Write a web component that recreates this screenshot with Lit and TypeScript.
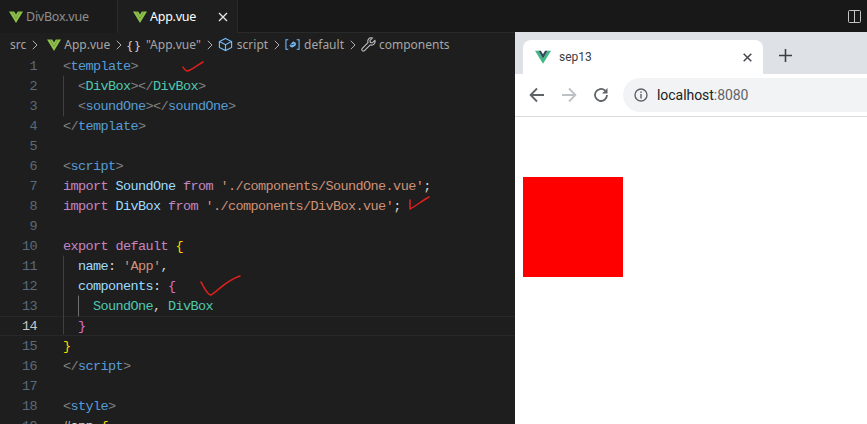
import { LitElement, html, css, svg } from "lit";
import { customElement } from "lit/decorators.js";

type Tok = [string, string];
const P = "p", T = "t", C = "c", K = "k", V = "v", N = "n", S = "s", W = "w", Y = "y", M = "m", A = "a";
const lines: Tok[][] = [
  [[P, "<"], [T, "template"], [P, ">"]],
  [[W, "  "], [P, "<"], [C, "DivBox"], [P, "></"], [C, "DivBox"], [P, ">"]],
  [[W, "  "], [P, "<"], [T, "soundOne"], [P, "></"], [T, "soundOne"], [P, ">"]],
  [[P, "</"], [T, "template"], [P, ">"]],
  [],
  [[P, "<"], [T, "script"], [P, ">"]],
  [[K, "import"], [W, " "], [V, "SoundOne"], [W, " "], [K, "from"], [W, " "], [S, "'./components/SoundOne.vue'"], [W, ";"]],
  [[K, "import"], [W, " "], [V, "DivBox"], [W, " "], [K, "from"], [W, " "], [S, "'./components/DivBox.vue'"], [W, ";"]],
  [],
  [[K, "export"], [W, " "], [K, "default"], [W, " "], [Y, "{"]],
  [[W, "  "], [N, "name"], [W, ": "], [S, "'App'"], [W, ","]],
  [[W, "  "], [N, "components"], [W, ": "], [M, "{"]],
  [[W, "    "], [A, "SoundOne"], [W, ", "], [A, "DivBox"]],
  [[W, "  "], [M, "}"]],
  [[Y, "}"]],
  [[P, "</"], [T, "script"], [P, ">"]],
  [],
  [[P, "<"], [T, "style"], [P, ">"]],
  [[W, "#app "], [Y, "{"]],
];

const vue = (a: string, b: string, cls = "vue") => html`<svg class=${cls} viewBox="0 0 14 12"><path d="M0 0.5H3L7 7.5L11 0.5H14L7 12Z" fill=${a}/><path d="M3 0.5H5.2L7 3.6L8.8 0.5H11L7 7.5Z" fill=${b}/></svg>`;
const chev = html`<svg class="chev" viewBox="0 0 6 10"><path d="M0.8 0.8L5 5L0.8 9.2" fill="none" stroke="#b0b0b0" stroke-width="1"/></svg>`;

@customElement("app-root")
export class AppRoot extends LitElement {
  static styles = css`
    :host { display: block; width: 867px; height: 424px; overflow: hidden; background: #1e1e1e; position: relative; font-family: "Noto Sans", sans-serif; }
    .top { display: flex; height: 33px; background: #181818; box-sizing: border-box; border-bottom: 1px solid #2a2a2a; }
    .tab { display: flex; align-items: center; height: 33px; box-sizing: border-box; font-size: 12.5px; letter-spacing: -0.25px; }
    .tab.off { width: 118px; padding-left: 9px; background: #1b1b1b; color: #8f8f8f; border-right: 1px solid #2a2a2a; }
    .tab.on { width: 120px; padding-left: 15px; background: #1e1e1e; color: #ffffff; border-right: 1px solid #2a2a2a; }
    .tab span { margin-left: 3px; }
    .tab.on span { flex: 1; }
    .x { width: 10px; height: 10px; margin-right: 9px; }
    .spacer { flex: 1; }
    .split { width: 13px; height: 13px; margin: 10px 6px 0 0; }
    .vue { width: 14px; height: 12px; flex: none; }
    .body { display: flex; height: 391px; }
    .editor { width: 515px; flex: none; background: #1e1e1e; overflow: hidden; position: relative; }
    .crumbs { display: flex; align-items: center; height: 23px; padding-left: 10px; font-size: 12px; color: #a6a6a6; white-space: nowrap; }
    .chev { width: 6px; height: 10px; margin: 0 5px 0 6px; flex: none; }
    .crumbs .vue { margin: 0 3px 0 4px; }
    .ic { width: 15px; height: 15px; flex: none; margin-right: 4px; }
    .ic.tight { margin-right: 3px; }
    .brace { color: #d0d0d0; margin-right: 3px; font-size: 13px; letter-spacing: 3px; }
    .code { font-family: "Liberation Mono", monospace; font-size: 13.5px; letter-spacing: -0.6px; line-height: 20px; }
    .ln { display: flex; height: 20px; box-sizing: border-box; position: relative; }
    .ln.cur { box-shadow: inset 0 1px 0 #282828, inset 0 -1px 0 #282828; }
    .num { width: 37px; text-align: right; color: #5a6a78; flex: none; padding-top: 1px; }
    .num.cur { color: #c6c6c6; }
    .txt { margin-left: 26px; white-space: pre; padding-top: 1px; }
    .p { color: #808080; } .t { color: #569cd6; } .c { color: #4ec9b0; } .k { color: #c586c0; }
    .v { color: #9cdcfe; } .n { color: #9cdcfe; } .s { color: #ce9178; } .w { color: #d4d4d4; }
    .y { color: #ffd700; } .m { color: #da70d6; } .a { color: #4ec9b0; }
    .browser { flex: 1; display: flex; flex-direction: column; background: #fff; margin-top: -1px; }
    .strip { height: 42px; box-sizing: border-box; padding: 8px 0 0 8px; background: #dee1e6; display: flex; align-items: stretch; }
    .btab { width: 240px; background: #fff; border-radius: 8px 8px 0 0; display: flex; align-items: center; padding: 0 11px 0 12px; box-sizing: border-box; font-family: "Roboto", sans-serif; font-size: 12px; color: #3c4043; }
    .btab .vue { width: 16px; height: 14px; margin-right: 8px; }
    .btab span { flex: 1; }
    .bx { width: 9px; height: 9px; }
    .plus { width: 13px; height: 13px; margin: 9px 0 0 16px; }
    .bar { height: 43px; box-sizing: border-box; display: flex; align-items: center; padding: 0 0 0 14px; border-bottom: 1px solid #dadce0; background: #fff; }
    .nav { width: 16px; height: 16px; margin-right: 16px; flex: none; }
    .nav.last { margin-right: 14px; }
    .omni { flex: 1; height: 34px; background: #f1f3f4; border-radius: 17px 0 0 17px; display: flex; align-items: center; padding-left: 11px; font-family: "Roboto", sans-serif; font-size: 14px; letter-spacing: -0.05px; color: #202124; }
    .omni svg { width: 14px; height: 14px; margin-right: 9px; }
    .omni i { font-style: normal; color: #5f6368; }
    .page { flex: 1; padding: 60px 0 0 8px; background: #fff; }
    .red { width: 100px; height: 100px; background: #ff0000; }
    .marks { position: absolute; left: 0; top: 0; width: 867px; height: 424px; pointer-events: none; }
  `;

  render() {
    return html`
      <div class="top">
        <div class="tab off">${vue("#8dc149", "#8dc149")}<span>DivBox.vue</span></div>
        <div class="tab on">${vue("#8dc149", "#8dc149")}<span>App.vue</span>
          <svg class="x" viewBox="0 0 10 10"><path d="M1 1L9 9M9 1L1 9" stroke="#e8e8e8" stroke-width="1.3"/></svg></div>
        <div class="spacer"></div>
        <svg class="split" viewBox="0 0 13 13"><rect x="0.5" y="0.5" width="12" height="12" rx="1" fill="none" stroke="#c5c5c5"/><path d="M6.5 0.5V12.5" stroke="#c5c5c5"/></svg>
      </div>
      <div class="body">
        <div class="editor">
          <div class="crumbs">
            <span>src</span>${chev}${vue("#8dc149", "#8dc149")}<span>App.vue</span>${chev}
            <span class="brace">{}</span><span>"App.vue"</span>${chev}
            <svg class="ic" viewBox="0 0 16 16"><path d="M8 1.5L14.5 4.8V11.2L8 14.5L1.5 11.2V4.8ZM1.5 4.8L8 8.2L14.5 4.8M8 8.2V14.5" fill="none" stroke="#75beff" stroke-width="1.2"/></svg>
            <span>script</span>${chev}
            <svg class="ic" viewBox="0 0 16 16"><path d="M3.5 3H1V13H3.5M12.5 3H15V13H12.5" fill="none" stroke="#75beff" stroke-width="1.1"/><path d="M5 9.5L8.5 5L11.5 6.5L11 9L7.5 11Z" fill="#75beff" stroke="#75beff" stroke-width="0.6"/><path d="M6 8.5L10 7.5" stroke="#1e1e1e" stroke-width="0.8"/></svg>
            <span>default</span>${chev}
            <svg class="ic tight" viewBox="0 0 16 16"><path d="M14.8 3.6L12.2 6.2L10 5.8L9.6 3.6L12.2 1.1C10.4 0.5 8.4 1.2 7.6 2.9C7.1 4 7.2 5 7.5 6L1.4 12.2C0.8 12.8 0.8 13.8 1.4 14.5C2 15.1 3.1 15.1 3.7 14.5L9.9 8.4C11 8.8 12.2 8.7 13.2 8.1C14.7 7.2 15.4 5.3 14.8 3.6Z" fill="none" stroke="#c5c5c5" stroke-width="1.1"/></svg>
            <span>components</span>
          </div>
          <div class="code">
            ${lines.map((toks, i) => html`<div class="ln ${i === 13 ? "cur" : ""}"><div class="num ${i === 13 ? "cur" : ""}">${i + 1}</div><div class="txt">${toks.map(([c, s]) => html`<span class=${c}>${s}</span>`)}</div></div>`)}
          </div>
        </div>
        <div class="browser">
          <div class="strip">
            <div class="btab">${vue("#41b883", "#35495e")}<span>sep13</span>
              <svg class="bx" viewBox="0 0 9 9"><path d="M0.7 0.7L8.3 8.3M8.3 0.7L0.7 8.3" stroke="#45484c" stroke-width="1.5"/></svg></div>
            <svg class="plus" viewBox="0 0 13 13"><path d="M6.5 0V13M0 6.5H13" stroke="#3c4043" stroke-width="1.6"/></svg>
          </div>
          <div class="bar">
            <svg class="nav" viewBox="0 0 16 16"><path d="M15 8H2M8 1.5L1.6 8L8 14.5" fill="none" stroke="#5f6368" stroke-width="1.8"/></svg>
            <svg class="nav" viewBox="0 0 16 16"><path d="M1 8H14M8 1.5L14.4 8L8 14.5" fill="none" stroke="#bdc1c6" stroke-width="1.8"/></svg>
            <svg class="nav last" viewBox="0 0 16 16"><path d="M14 8A6 6 0 1 1 12 3.5" fill="none" stroke="#5f6368" stroke-width="1.8"/><path d="M14.5 1V6.5H9Z" fill="#5f6368"/></svg>
            <div class="omni">
              <svg viewBox="0 0 14 14"><circle cx="7" cy="7" r="6" fill="none" stroke="#5f6368" stroke-width="1.4"/><path d="M7 6V10.5M7 3.4V5" stroke="#5f6368" stroke-width="1.4"/></svg>
              <span>localhost<i>:8080</i></span>
            </div>
          </div>
          <div class="page"><div class="red"></div></div>
        </div>
      </div>
      <svg class="marks" viewBox="0 0 867 424">
        ${svg`<g fill="none" stroke-linecap="round" stroke-linejoin="round">
          <path d="M63.5 76V116M63.5 256V334" stroke="#404040" stroke-width="1"/>
          <path d="M78.5 296V316" stroke="#707070" stroke-width="1"/>
          <path d="M183 67C184 69 186 71 188 71C193 69 198 65 203 62" stroke="#e0201c" stroke-width="1.5"/>
          <path d="M410 200L410 209C416 206 423 200 429 197" stroke="#e0201c" stroke-width="1.5"/>
          <path d="M201 282C204 287 207 295 211 295C218 291 225 281 240 276" stroke="#e0201c" stroke-width="1.5"/>
        </g>`}
      </svg>
    `;
  }
}
